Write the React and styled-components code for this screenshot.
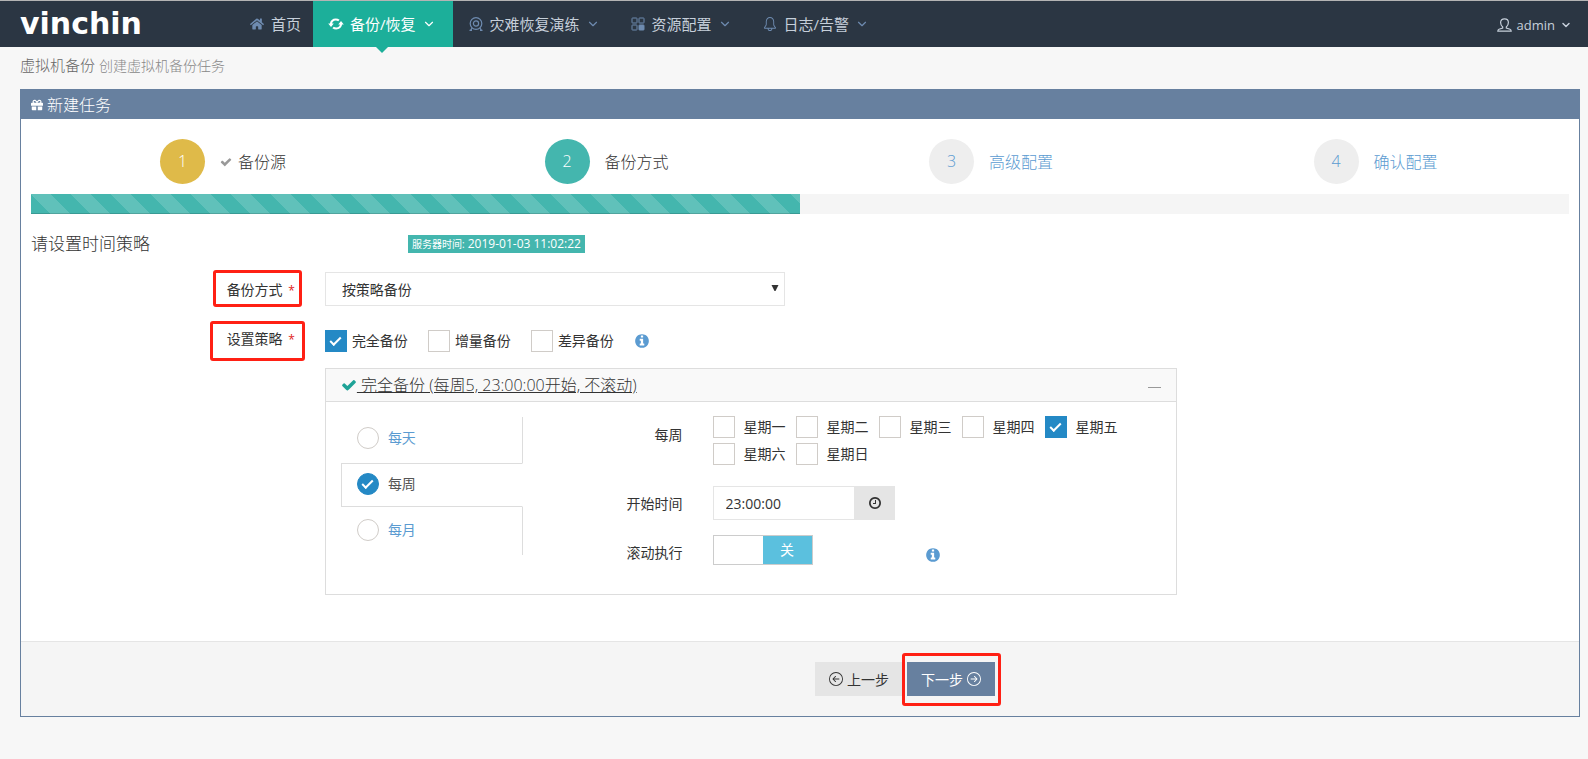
import React, { useState } from "react";
import styled, { createGlobalStyle, css } from "styled-components";
import { FaHome, FaGift } from "react-icons/fa";
import { FiChevronDown } from "react-icons/fi";
import { SlBell } from "react-icons/sl";
import { BsArrowLeftCircle, BsArrowRightCircle } from "react-icons/bs";

const GlobalStyle = createGlobalStyle`
  *, *::before, *::after {
    box-sizing: border-box;
  }
  body {
    margin: 0;
    background-color: #f7f7f7;
    color: #333;
    font-family: "Open Sans", "Noto Sans CJK SC", sans-serif;
    font-size: 14px;
    line-height: 20px;
  }
  button, input, select {
    font-family: inherit;
    font-size: inherit;
    color: inherit;
  }
`;

const CheckIcon = ({ size, color }) => (
  <svg width={size} height={size} viewBox="0 0 1792 1792" fill={color}>
    <path d="M1671 566q0 40-28 68l-724 724-136 136q-28 28-68 28t-68-28l-136-136-362-362q-28-28-28-68t28-68l136-136q28-28 68-28t68 28l294 295 656-657q28-28 68-28t68 28l136 136q28 28 28 68z" />
  </svg>
);

const InfoIcon = () => (
  <svg width="16" height="16" viewBox="0 0 1792 1792" fill="#5b9bd1">
    <path d="M1152 1376v-160q0-14-9-23t-23-9h-96v-512q0-14-9-23t-23-9h-320q-14 0-23 9t-9 23v160q0 14 9 23t23 9h96v320h-96q-14 0-23 9t-9 23v160q0 14 9 23t23 9h448q14 0 23-9t9-23zm-128-896v-160q0-14-9-23t-23-9h-192q-14 0-23 9t-9 23v160q0 14 9 23t23 9h192q14 0 23-9t9-23zm640 416q0 209-103 385.500t-279.500 279.500-385.500 103-385.500-103-279.500-279.500-103-385.500 103-385.500 279.500-279.500 385.500-103 385.500 103 279.500 279.500 103 385.500z" />
  </svg>
);

const ClockIcon = () => (
  <svg width="14" height="14" viewBox="0 0 1792 1792" fill="currentColor">
    <path d="M1024 544v448q0 14-9 23t-23 9h-320q-14 0-23-9t-9-23v-64q0-14 9-23t23-9h224v-352q0-14 9-23t23-9h64q14 0 23 9t9 23zm416 352q0-148-73-273t-198-198-273-73-273 73-198 198-73 273 73 273 198 198 273 73 273-73 198-198 73-273zm224 0q0 209-103 385.500t-279.500 279.500-385.500 103-385.500-103-279.500-279.500-103-385.500 103-385.500 279.500-279.500 385.500-103 385.500 103 279.500 279.500 103 385.500z" />
  </svg>
);

const LoopIcon = () => (
  <svg width="16" height="12" viewBox="0 0 16 12" fill="none" stroke="currentColor" strokeWidth="2.2">
    <path d="M3 6C3 3.200 5.200 1.500 7.800 1.500C9 1.500 10 1.800 10.900 2.500" />
    <path d="M13 6C13 8.800 10.800 10.500 8.200 10.500C7 10.500 6 10.200 5.100 9.500" />
    <path d="M0.200 5.500H5.800L3 9ZM15.800 6.500H10.200L13 3Z" fill="currentColor" stroke="none" />
  </svg>
);

const WebcamIcon = () => (
  <svg width="14" height="14" viewBox="0 0 14 14" fill="none" stroke="currentColor" strokeWidth="1.2">
    <circle cx="7" cy="6.5" r="5.8" />
    <circle cx="7" cy="6.5" r="2.6" />
    <path d="M3.200 10.800L1.500 13.400M10.800 10.800L12.500 13.400M0.500 13.400H3M11 13.400H13.500" />
  </svg>
);

const GridIcon = () => (
  <svg width="14" height="14" viewBox="0 0 14 14" fill="none" stroke="currentColor" strokeWidth="1">
    <rect x="1" y="1" width="5" height="5" rx="0.5" />
    <rect x="8" y="1" width="5" height="5" rx="0.5" />
    <rect x="1" y="8" width="5" height="5" rx="0.5" />
    <rect x="8" y="8" width="5" height="5" rx="0.5" fill="currentColor" />
  </svg>
);

const UserIcon = () => (
  <svg width="15" height="14" viewBox="0 0 15 14" fill="none" stroke="currentColor" strokeWidth="1.2">
    <path d="M5.700 9C4.400 8 3.600 6.400 3.600 4.600C3.600 2.200 5.200 0.800 7.500 0.800S11.400 2.200 11.400 4.600C11.400 6.400 10.600 8 9.300 9V10L13 11.200C13.800 11.500 14.200 12.200 14.200 13.200H0.800C0.800 12.200 1.200 11.500 2 11.200L5.700 10Z" />
  </svg>
);

const menus = [
  { name: "首页", icon: <FaHome /> },
  { name: "备份/恢复", icon: <LoopIcon />, active: true, more: true },
  { name: "灾难恢复演练", icon: <WebcamIcon />, more: true },
  { name: "资源配置", icon: <GridIcon />, more: true },
  { name: "日志/告警", icon: <SlBell />, more: true },
];

const steps = [
  { name: "备份源", state: "done" },
  { name: "备份方式", state: "active" },
  { name: "高级配置", state: "todo" },
  { name: "确认配置", state: "todo" },
];

const backupTypes = ["完全备份", "增量备份", "差异备份"];
const periods = ["每天", "每周", "每月"];
const weekdays = ["星期一", "星期二", "星期三", "星期四", "星期五", "星期六", "星期日"];

function App() {
  const [types, setTypes] = useState(["完全备份"]);
  const [days, setDays] = useState(["星期五"]);
  const [period, setPeriod] = useState("每周");
  const [time, setTime] = useState("23:00:00");
  const [rolling, setRolling] = useState(false);
  const [open, setOpen] = useState(true);

  const toggle = (list, setList, value) => {
    setList(list.includes(value) ? list.filter((v) => v !== value) : [...list, value]);
  };

  return (
    <>
      <GlobalStyle />
      <Navbar>
        <Logo href="#">vinchin</Logo>
        <Menu>
          {menus.map((m) => (
            <MenuLink key={m.name} href="#" $active={m.active}>
              <MenuIcon>{m.icon}</MenuIcon>
              {m.name}
              {m.more && <FiChevronDown size={14} />}
            </MenuLink>
          ))}
        </Menu>
        <UserMenu type="button">
          <UserIcon />
          admin
          <FiChevronDown size={12} strokeWidth={3} />
        </UserMenu>
      </Navbar>

      <PageTitle>
        虚拟机备份 <small>创建虚拟机备份任务</small>
      </PageTitle>

      <Portlet>
        <PortletTitle>
          <FaGift size={12} />
          新建任务
        </PortletTitle>
        <PortletBody>
          <Steps>
            {steps.map((s, i) => (
              <Step key={s.name}>
                <StepLink href="#" $state={s.state}>
                  <StepNumber $state={s.state}>{i + 1}</StepNumber>
                  {s.state === "done" && <CheckIcon size={12} color="#999" />}
                  {s.name}
                </StepLink>
              </Step>
            ))}
          </Steps>
          <Progress>
            <ProgressBar />
          </Progress>

          <Heading>
            <h3>请设置时间策略</h3>
            <ServerTime>
              <small>服务器时间:</small> 2019-01-03 11:02:22
            </ServerTime>
          </Heading>

          <Form>
            <Row>
              <Label htmlFor="mode">
                备份方式 <Required>*</Required>
                <Mark $box="-2px 8px -1px auto" $width="89px" />
              </Label>
              <SelectCol>
                <Select id="mode" defaultValue="strategy">
                  <option value="strategy">按策略备份</option>
                  <option value="once">一次性备份</option>
                </Select>
                <Caret viewBox="0 0 8 6">
                  <path d="M0.500 0H7.500L4.500 6H3.500Z" fill="#333" />
                </Caret>
              </SelectCol>
            </Row>
            <Row>
              <Label as="span">
                设置策略 <Required>*</Required>
                <Mark $box="0 5px -6px auto" $width="95px" />
              </Label>
              <WideCol>
                <Types>
                  {backupTypes.map((t) => (
                    <CheckLabel key={t}>
                      <Checkbox
                        type="checkbox"
                        checked={types.includes(t)}
                        onChange={() => toggle(types, setTypes, t)}
                      />
                      {t}
                    </CheckLabel>
                  ))}
                  <InfoIcon />
                </Types>

                <Panel>
                  <PanelTitle>
                    <PanelLink href="#">
                      <CheckIcon size={16} color="#1fa397" />
                      <span>&nbsp;完全备份 (每周5, 23:00:00开始, 不滚动)</span>
                    </PanelLink>
                    <Collapse type="button" aria-label="collapse" onClick={() => setOpen(!open)} />
                  </PanelTitle>
                  {open && (
                    <PanelBody>
                      <TabCol>
                        <Tabs>
                          {periods.map((p) => (
                            <Tab key={p} $active={p === period}>
                              <Radio
                                type="radio"
                                name="period"
                                checked={p === period}
                                onChange={() => setPeriod(p)}
                              />
                              {p}
                            </Tab>
                          ))}
                        </Tabs>
                      </TabCol>
                      <Fields>
                        <Row>
                          <FieldLabel as="span">每周</FieldLabel>
                          <WideCol>
                            <Days>
                              {weekdays.map((d) => (
                                <DayLabel key={d}>
                                  <Checkbox
                                    type="checkbox"
                                    checked={days.includes(d)}
                                    onChange={() => toggle(days, setDays, d)}
                                  />
                                  {d}
                                </DayLabel>
                              ))}
                            </Days>
                          </WideCol>
                        </Row>
                        <Row>
                          <FieldLabel htmlFor="start">开始时间</FieldLabel>
                          <ShortCol>
                            <TimeGroup>
                              <TimeInput
                                id="start"
                                type="text"
                                value={time}
                                onChange={(e) => setTime(e.target.value)}
                              />
                              <TimeButton type="button" aria-label="time">
                                <ClockIcon />
                              </TimeButton>
                            </TimeGroup>
                          </ShortCol>
                        </Row>
                        <Row>
                          <FieldLabel htmlFor="rolling">滚动执行</FieldLabel>
                          <ShortCol>
                            <Switch>
                              <input
                                id="rolling"
                                type="checkbox"
                                checked={rolling}
                                onChange={() => setRolling(!rolling)}
                              />
                              {rolling && <SwitchOn>开</SwitchOn>}
                              <SwitchBlank />
                              {!rolling && <SwitchOn>关</SwitchOn>}
                            </Switch>
                          </ShortCol>
                          <Hint>
                            <InfoIcon />
                          </Hint>
                        </Row>
                      </Fields>
                    </PanelBody>
                  )}
                </Panel>
              </WideCol>
            </Row>
          </Form>
        </PortletBody>

        <Actions>
          <Button type="button">
            <BsArrowLeftCircle size={14} />
            上一步
          </Button>
          <Button type="button" $primary>
            下一步
            <BsArrowRightCircle size={14} />
            <Mark $box="-9px -6px -10px -5px" />
          </Button>
        </Actions>
      </Portlet>
    </>
  );
}

// 顶部导航
const Navbar = styled.nav`
  display: flex;
  height: 47px;
  border-top: 1px solid #b4b4b4;
  background-color: #2b3643;
`;

const Logo = styled.a`
  width: 234px;
  padding-left: 20px;
  color: white;
  font: bold 30px/46px "DejaVu Sans", sans-serif;
  text-decoration: none;
`;

const Menu = styled.div`
  display: flex;
  flex: 1;
`;

const MenuLink = styled.a`
  position: relative;
  display: flex;
  align-items: center;
  padding: 0 ${({ $active }) => ($active ? "14px" : "12px")} 0 16px;
  color: ${({ $active }) => ($active ? "white" : "#c6cfda")};
  background-color: ${({ $active }) => ($active ? "#1caf9a" : "transparent")};
  font-size: 15px;
  text-decoration: none;
  white-space: nowrap;

  > svg {
    margin: 0 3px 0 6px;
    color: ${({ $active }) => ($active ? "white" : "#6e8bb0")};
  }

  // 选中菜单下方的小三角
  ${({ $active }) => $active && css`
    &::after {
      content: "";
      position: absolute;
      top: 100%;
      left: 50%;
      margin-left: -7px;
      border: 6px solid transparent;
      border-top-color: #1caf9a;
      border-bottom: 0;
    }
    ${MenuIcon} {
      color: white;
    }
  `}
`;

const MenuIcon = styled.span`
  display: flex;
  justify-content: center;
  width: 14px;
  margin-right: 7px;
  color: #6e8bb0;
  font-size: 14px;

  svg {
    flex: none;
  }
`;

const UserMenu = styled.button`
  display: flex;
  align-items: center;
  gap: 5px;
  padding: 2px 16px 0;
  border: 0;
  background: none;
  color: #c6cfda;
  font-size: 13px;
`;

const PageTitle = styled.h1`
  margin: 0 20px;
  padding-bottom: 5px;
  color: #666;
  font-size: 15px;
  font-weight: 300;
  line-height: 36px;

  small {
    color: #888;
    font-size: 14px;
  }
`;

// 任务面板
const Portlet = styled.section`
  margin: 0 8px 0 20px;
  border: 1px solid #67809f;
  background-color: white;
`;

const PortletTitle = styled.h2`
  display: flex;
  align-items: center;
  gap: 4px;
  height: 29px;
  margin: 0;
  padding: 0 10px;
  background-color: #67809f;
  color: white;
  font-size: 16px;
  font-weight: 300;
`;

const PortletBody = styled.div`
  padding: 20px 10px 46px;
`;

const Steps = styled.ol`
  display: flex;
  margin: 0 0 10px;
  padding: 0;
  list-style: none;
`;

const Step = styled.li`
  flex: 1;
  padding-left: 129px;
`;

const StepLink = styled.a`
  display: flex;
  align-items: center;
  gap: 6px;
  color: ${({ $state }) => ($state === "todo" ? "#5b9bd1" : "#333")};
  font-size: 16px;
  font-weight: 300;
  text-decoration: none;
`;

const stepColors = {
  done: "#dfba49",
  active: "#44b6ae",
  todo: "#eee",
};

const StepNumber = styled.span`
  width: 45px;
  margin-right: 9px;
  border-radius: 50%;
  background-color: ${({ $state }) => stepColors[$state]};
  color: ${({ $state }) => ($state === "todo" ? "#5b9bd1" : "white")};
  line-height: 45px;
  text-align: center;
`;

const Progress = styled.div`
  height: 20px;
  background-color: #f5f5f5;
`;

const ProgressBar = styled.div`
  width: 50%;
  height: 100%;
  background-color: #44b6ae;
  background-image: linear-gradient(
    45deg,
    rgba(255, 255, 255, 0.15) 25%,
    transparent 25%,
    transparent 50%,
    rgba(255, 255, 255, 0.15) 50%,
    rgba(255, 255, 255, 0.15) 75%,
    transparent 75%,
    transparent
  );
  background-size: 40px 40px;
  box-shadow: inset 0 -1px 0 rgba(0, 0, 0, 0.15);
`;

const Heading = styled.div`
  display: flex;
  align-items: center;
  height: 58px;
  margin: 0 -15px;
  padding-top: 2px;

  h3 {
    width: 25%;
    margin: 0;
    padding-left: 15px;
    font-size: 17px;
    font-weight: 300;
  }
`;

const ServerTime = styled.span`
  padding: 0 4px;
  background-color: #44b6ae;
  color: white;
  font-size: 12px;
  line-height: 18px;

  small {
    font-size: 10px;
  }
`;

// 表单按 12 列划分
const Form = styled.form`
  width: calc(75% + 22px);
  margin-left: -15px;
`;

const Row = styled.div`
  display: flex;
  margin-bottom: 15px;

  &:last-child {
    margin-bottom: 0;
  }
`;

const Label = styled.label`
  position: relative;
  width: 25%;
  padding: 8px 15px 0 0;
  height: 34px;
  text-align: right;
`;

const FieldLabel = styled(Label)`
  padding-top: 8px;
`;

const Required = styled.span`
  margin-left: 2px;
  color: #e02222;
  font-size: 12px;
`;

const WideCol = styled.div`
  width: 75%;
  padding: 0 15px;
`;

const SelectCol = styled.div`
  position: relative;
  width: 41.666%;
  padding: 0 15px;
`;

const ShortCol = styled.div`
  width: 33.333%;
  padding: 0 15px;
`;

const Select = styled.select`
  appearance: none;
  width: 100%;
  height: 34px;
  padding: 0 16px;
  border: 1px solid #e5e5e5;
  border-radius: 0;
  background-color: white;
`;

const Caret = styled.svg`
  position: absolute;
  top: 13px;
  right: 21px;
  width: 8px;
  height: 6px;
  pointer-events: none;
`;

// 红色标注框
const Mark = styled.span`
  position: absolute;
  inset: ${({ $box }) => $box};
  width: ${({ $width }) => $width || "auto"};
  border: 3px solid #ff2014;
  border-radius: 3px;
  pointer-events: none;
`;

const Types = styled.div`
  display: flex;
  align-items: center;
  gap: 20px;
  height: 32px;
  margin-bottom: 15px;
  padding-top: 8px;
`;

const CheckLabel = styled.label`
  display: flex;
  align-items: center;
  gap: 5px;
`;

const Checkbox = styled.input`
  appearance: none;
  flex: none;
  display: grid;
  place-content: center;
  width: 22px;
  height: 22px;
  margin: 0;
  border: 1px solid #d0ccc8;
  background-color: white;

  &:checked {
    border-color: #2489c5;
    background-color: #2489c5;
  }

  &:checked::before {
    content: "";
    width: 11px;
    height: 6px;
    margin-bottom: 3px;
    border: solid white;
    border-width: 0 0 2px 2px;
    transform: rotate(-45deg);
  }
`;

const Radio = styled(Checkbox)`
  border-radius: 50%;
`;

const Panel = styled.div`
  border: 1px solid #ddd;
`;

const PanelTitle = styled.div`
  display: flex;
  align-items: center;
  justify-content: space-between;
  height: 33px;
  padding: 0 15px;
  border-bottom: 1px solid #ddd;
  background-color: #f9f9f9;
`;

const PanelLink = styled.a`
  display: flex;
  align-items: center;
  color: #333;
  font-size: 16px;
  font-weight: 300;
`;

const Collapse = styled.button`
  display: flex;
  align-items: center;
  width: 13px;
  height: 20px;
  padding: 0;
  border: 0;
  background: none;

  &::before {
    content: "";
    width: 100%;
    height: 1px;
    margin-top: 4px;
    background-color: #999;
  }
`;

const PanelBody = styled.div`
  display: flex;
  padding: 15px 0 25px;
`;

const TabCol = styled.div`
  width: 25%;
  padding: 0 15px;
`;

const Tabs = styled.div`
  display: flex;
  flex-direction: column;
  gap: 2px;
  padding-bottom: 2px;
  border-right: 1px solid #ddd;
`;

const Tab = styled.label`
  display: flex;
  align-items: center;
  gap: 9px;
  height: 44px;
  margin-right: -1px;
  padding: 0 15px 2px;
  border: 1px solid transparent;
  color: #5b9bd1;

  ${({ $active }) => $active && css`
    border-color: #ddd white #ddd #ddd;
    color: #555;
  `}
`;

const Fields = styled.div`
  width: 75%;
`;

const Days = styled.div`
  display: flex;
  flex-wrap: wrap;
  column-gap: 10px;
`;

const DayLabel = styled.label`
  display: flex;
  align-items: center;
  gap: 9px;
  height: 27px;
  padding-bottom: 7px;
`;

const TimeGroup = styled.div`
  display: flex;
  height: 34px;
`;

const TimeInput = styled.input`
  flex: 1;
  min-width: 0;
  padding: 0 12px;
  border: 1px solid #e5e5e5;
`;

const TimeButton = styled.button`
  display: flex;
  align-items: center;
  justify-content: center;
  width: 40px;
  padding: 0;
  border: 0;
  background-color: #e5e5e5;
`;

const Switch = styled.label`
  display: flex;
  width: 100px;
  height: 30px;
  border: 1px solid #ccc;

  input {
    position: absolute;
    opacity: 0;
  }
`;

const SwitchBlank = styled.span`
  flex: 1;
`;

const SwitchOn = styled.span`
  flex: 1;
  background-color: #5bc0de;
  color: white;
  line-height: 28px;
  text-align: center;
`;

const Hint = styled.span`
  padding: 12px 15px 0;

  svg {
    display: block;
  }
`;

// 底部按钮
const Actions = styled.div`
  display: flex;
  gap: 4px;
  padding: 20px 0 20px calc(50% + 15px);
  border-top: 1px solid #e5e5e5;
  background-color: #f5f5f5;
`;

const Button = styled.button`
  position: relative;
  display: flex;
  align-items: center;
  gap: 4px;
  height: 34px;
  padding: 0 14px;
  border: 0;
  background-color: ${({ $primary }) => ($primary ? "#67809f" : "#e5e5e5")};
  color: ${({ $primary }) => ($primary ? "white" : "#333")};
`;

export default App;
